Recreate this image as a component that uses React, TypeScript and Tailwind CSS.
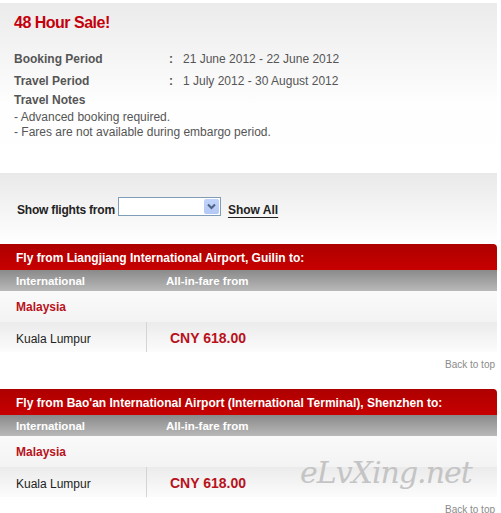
import React from 'react';

const font = { fontFamily: '"Liberation Sans", Arial, sans-serif' };

const Route = ({ from }: { from: string }) => {
  return (
    <div>
      <div className="h-[26px] w-[497px] rounded-tr-[4px] bg-gradient-to-b from-[#ad0000] to-[#c80000] pl-[16px] pt-[5px] text-[12px] font-bold text-white">
        {from}
      </div>
      <div className="flex h-[21px] w-[497px] bg-gradient-to-b from-[#8a8a8a] to-[#b9b9b9] pt-[3px] text-[11.5px] font-bold text-white">
        <div className="w-[166px] pl-[16px]">International</div>
        <div>All-in-fare from</div>
      </div>
      <div className="h-[31px] w-[497px] bg-gradient-to-b from-[#fafafa] to-[#f3f3f3] pl-[16px] pt-[7px] text-[12px] font-bold text-[#b8121c]">
        Malaysia
      </div>
      <div className="flex h-[30px] w-[497px] bg-gradient-to-b from-[#ebebeb] to-[#fcfcfc]">
        <div className="w-[147px] border-r border-[#d4d4d4] pl-[16px] pt-[8px] text-[12px] text-[#222]">Kuala Lumpur</div>
        <div className="pl-[23px] pt-[6px] text-[14px] font-bold text-[#b8121c]">CNY 618.00</div>
      </div>
      <div className="flex h-[37px] w-[497px] justify-end pt-[5px] text-[10px] text-[#8a8a8a]">
        <span className="pr-[2px]">Back to top</span>
      </div>
    </div>
  );
};

const App = () => {
  return (
    <div className="relative h-[513px] w-[501px] overflow-hidden bg-white" style={font}>
      <div className="pt-[3px]">
        <div className="h-[170px] w-[497px] bg-gradient-to-b from-[#ebebeb] via-[#fefefe] via-60% to-white px-[14px] pt-[8px]">
          <h1 className="text-[16px] font-bold tracking-[-0.5px] text-[#c4000b]">48 Hour Sale!</h1>
          <div className="mt-[15px] text-[12px] text-[#555]">
            <div className="flex h-[22px]">
              <div className="w-[155px] font-bold">Booking Period</div>
              <div className="w-[14px] font-bold">:</div>
              <div>21 June 2012 - 22 June 2012</div>
            </div>
            <div className="flex h-[19px]">
              <div className="w-[155px] font-bold">Travel Period</div>
              <div className="w-[14px] font-bold">:</div>
              <div>1 July 2012 - 30 August 2012</div>
            </div>
            <div className="h-[19px] font-bold">Travel Notes</div>
            <div className="leading-[15px]">- Advanced booking required.</div>
            <div className="leading-[15px]">- Fares are not available during embargo period.</div>
          </div>
        </div>
      </div>
      <div className="flex h-[71px] w-[497px] items-start bg-gradient-to-b from-[#e9e9e9] to-white pl-[17px] pt-[24px]">
        <span className="mt-[4px] text-[12px] font-bold tracking-[-0.2px] text-[#222]">Show flights from</span>
        <div className="ml-[3px] flex h-[19px] w-[103px] items-center justify-end border border-[#7f9db9] bg-white p-[1px]">
          <div className="flex h-[15px] w-[15px] items-center justify-center rounded-[2px] bg-gradient-to-b from-[#c1d3fb] to-[#b4c8f5]">
            <svg width="9" height="7" viewBox="0 0 9 7">
              <path d="M1 1.5 L4.5 5 L8 1.5" fill="none" stroke="#4d6185" strokeWidth="2" />
            </svg>
          </div>
        </div>
        <span className="ml-[7px] mt-[4px] text-[12px] font-bold text-[#222] underline underline-offset-[3px]">Show All</span>
      </div>
      <Route from="Fly from Liangjiang International Airport, Guilin to:" />
      <Route from="Fly from Bao'an International Airport (International Terminal), Shenzhen to:" />
      <div
        className="absolute left-[300px] top-[450px] text-[30px] italic tracking-[-1px] text-[#c4c4c4]"
        style={{ fontFamily: '"DejaVu Serif", serif' }}
      >
        eLvXing.net
      </div>
    </div>
  );
};

export default App;
